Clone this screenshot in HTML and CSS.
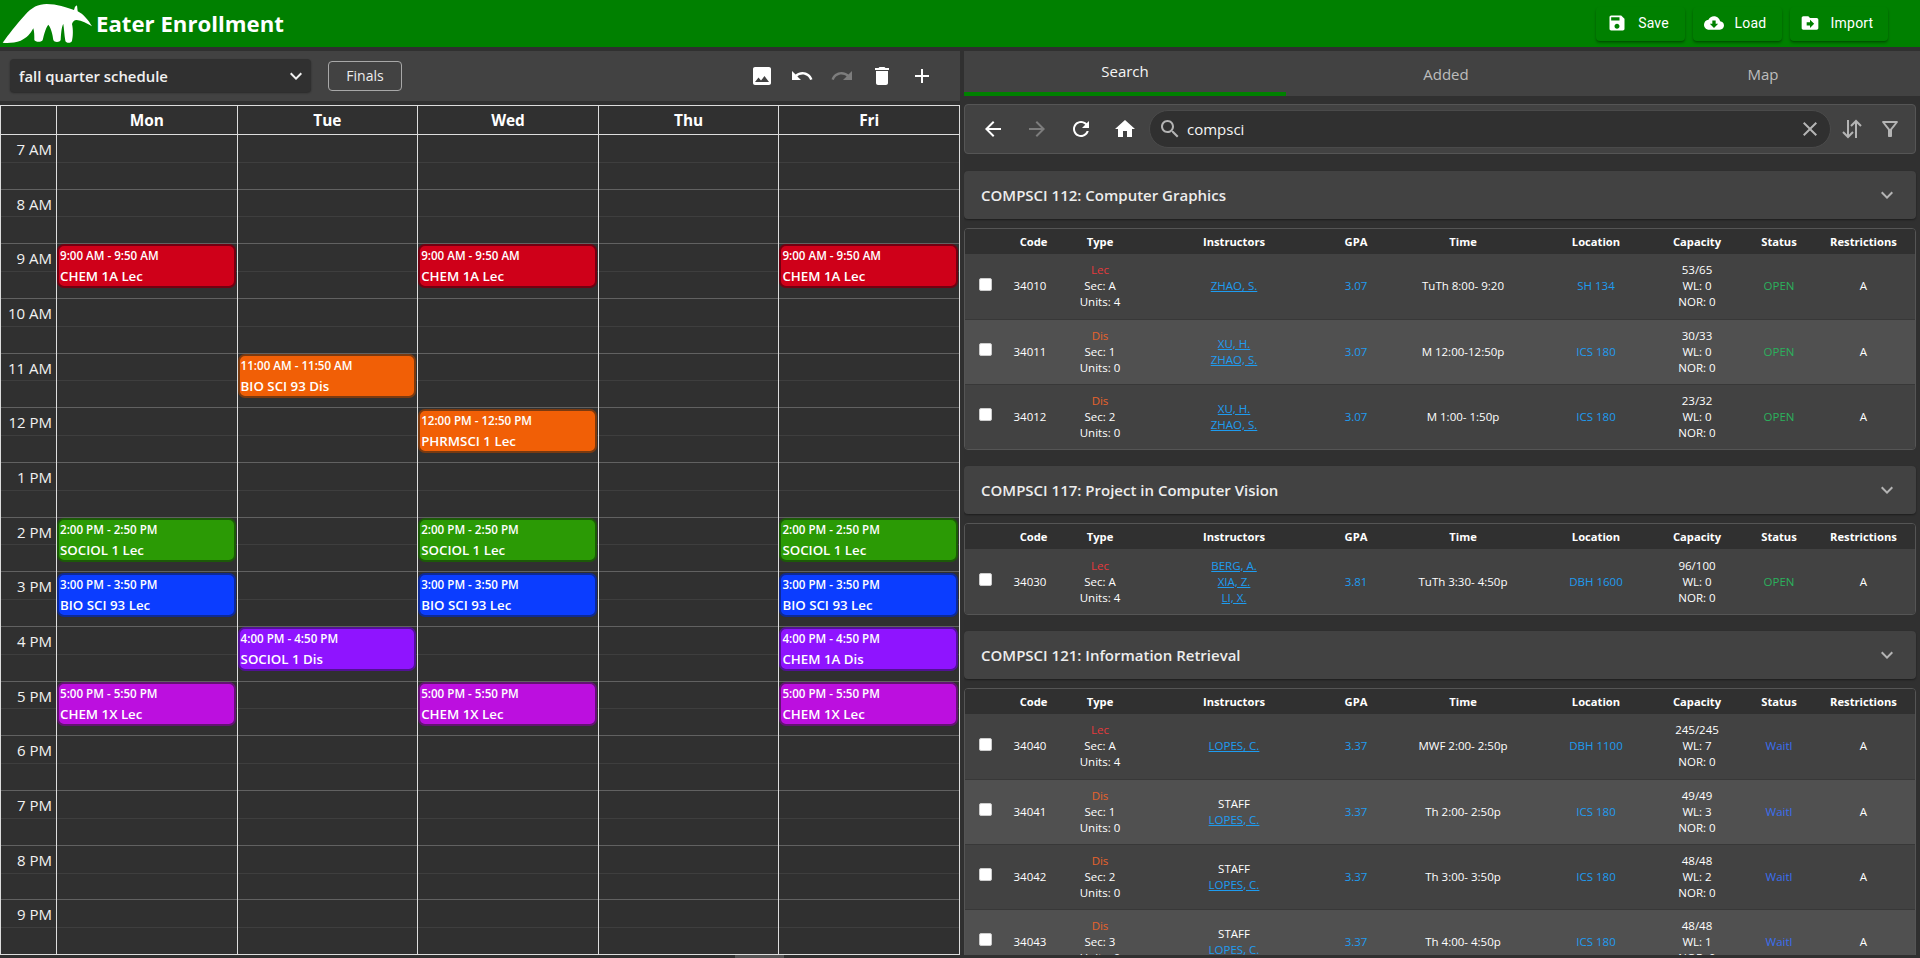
FILE: index.html
```html
<!DOCTYPE html>
<html lang="en">
<head>
<meta charset="utf-8">
<title>Eater Enrollment</title>
<link rel="stylesheet" href="styles.css">
</head>
<body>
<svg class="sprite" aria-hidden="true">
  <symbol id="i-image" viewBox="0 0 24 24"><path d="M21 19V5c0-1.1-.9-2-2-2H5c-1.1 0-2 .9-2 2v14c0 1.1.9 2 2 2h14c1.1 0 2-.9 2-2zM8.5 13.5l2.5 3.01L14.5 12l4.5 6H5l3.5-4.5z"/></symbol>
  <symbol id="i-undo" viewBox="0 0 24 24"><path d="M12.5 8c-2.65 0-5.05.99-6.9 2.6L2 7v9h9l-3.62-3.62c1.39-1.16 3.16-1.88 5.12-1.88 3.54 0 6.55 2.31 7.6 5.5l2.37-.78C21.08 11.03 17.15 8 12.5 8z"/></symbol>
  <symbol id="i-redo" viewBox="0 0 24 24"><path d="M18.4 10.6C16.55 8.99 14.15 8 11.5 8c-4.65 0-8.58 3.03-9.96 7.22L3.9 16c1.05-3.19 4.05-5.5 7.6-5.5 1.95 0 3.73.72 5.12 1.88L13 16h9V7l-3.6 3.6z"/></symbol>
  <symbol id="i-delete" viewBox="0 0 24 24"><path d="M6 19c0 1.1.9 2 2 2h8c1.1 0 2-.9 2-2V7H6v12zM19 4h-3.5l-1-1h-5l-1 1H5v2h14V4z"/></symbol>
  <symbol id="i-add" viewBox="0 0 24 24"><path d="M19 13h-6v6h-2v-6H5v-2h6V5h2v6h6v2z"/></symbol>
  <symbol id="i-back" viewBox="0 0 24 24"><path d="M20 11H7.83l5.59-5.59L12 4l-8 8 8 8 1.41-1.41L7.83 13H20v-2z"/></symbol>
  <symbol id="i-forward" viewBox="0 0 24 24"><path d="M12 4l-1.41 1.41L16.17 11H4v2h12.17l-5.58 5.59L12 20l8-8z"/></symbol>
  <symbol id="i-refresh" viewBox="0 0 24 24"><path d="M17.65 6.35C16.2 4.9 14.21 4 12 4c-4.42 0-7.99 3.58-7.99 8s3.57 8 7.99 8c3.73 0 6.84-2.55 7.73-6h-2.08c-.82 2.33-3.04 4-5.65 4-3.31 0-6-2.69-6-6s2.69-6 6-6c1.66 0 3.14.69 4.22 1.78L13 11h7V4l-2.35 2.35z"/></symbol>
  <symbol id="i-home" viewBox="0 0 24 24"><path d="M10 20v-6h4v6h5v-8h3L12 3 2 12h3v8z"/></symbol>
  <symbol id="i-search" viewBox="0 0 24 24"><path d="M15.5 14h-.79l-.28-.27C15.41 12.59 16 11.11 16 9.5 16 5.91 13.09 3 9.5 3S3 5.91 3 9.5 5.91 16 9.5 16c1.61 0 3.09-.59 4.23-1.57l.27.28v.79l5 4.99L20.49 19l-4.99-5zm-6 0C7.01 14 5 11.99 5 9.5S7.01 5 9.5 5 14 7.01 14 9.5 11.99 14 9.5 14z"/></symbol>
  <symbol id="i-clear" viewBox="0 0 24 24"><path d="M19 6.41 17.59 5 12 10.59 6.41 5 5 6.41 10.59 12 5 17.59 6.41 19 12 13.41 17.59 19 19 17.59 13.41 12z"/></symbol>
  <symbol id="i-sort" viewBox="0 0 24 24"><path class="stroke-only" d="M8 3v17M3 15l5 5 5-5M16 21V4M11 9l5-5 5 5"/></symbol>
  <symbol id="i-filter" viewBox="0 0 24 24"><path d="M7 6h10l-5.01 6.3L7 6zm-2.75-.39C6.27 8.2 10 13 10 13v6c0 .55.45 1 1 1h2c.55 0 1-.45 1-1v-6s3.72-4.8 5.74-7.39c.51-.66.04-1.61-.79-1.61H5.04c-.83 0-1.3.95-.79 1.61z"/></symbol>
  <symbol id="i-expand" viewBox="0 0 24 24"><path d="M16.59 8.59 12 13.17 7.41 8.59 6 10l6 6 6-6z"/></symbol>
  <symbol id="i-save" viewBox="0 0 24 24"><path d="M17 3H5c-1.11 0-2 .9-2 2v14c0 1.1.89 2 2 2h14c1.1 0 2-.9 2-2V7l-4-4zm-5 16c-1.66 0-3-1.34-3-3s1.34-3 3-3 3 1.34 3 3-1.34 3-3 3zm3-10H5V5h10v4z"/></symbol>
  <symbol id="i-cloud" viewBox="0 0 24 24"><path d="M19.35 10.04C18.67 6.59 15.64 4 12 4 9.11 4 6.6 5.64 5.35 8.04 2.34 8.36 0 10.91 0 14c0 3.31 2.69 6 6 6h13c2.76 0 5-2.24 5-5 0-2.64-2.05-4.78-4.65-4.96zM17 13l-5 5-5-5h3V9h4v4h3z"/></symbol>
  <symbol id="i-import" viewBox="0 0 24 24"><path d="M20 6h-8l-2-2H4c-1.1 0-1.99.9-1.99 2L2 18c0 1.1.9 2 2 2h16c1.1 0 2-.9 2-2V8c0-1.1-.9-2-2-2zm-8 12v-3H8v-4h4V8l5 5-5 5z"/></symbol>
</svg>

<header class="topbar">
  <div class="brand">
    <svg class="logo" viewBox="0 0 300 144"><path d="M8 128C25 105 50 72 75 45C95 22 115 12 140 12C170 12 200 22 222 30L225 20L231 16L233 34C250 42 265 60 276 79C262 70 245 62 230 60C222 60 218 66 216 72C220 90 219 110 216 122C214 130 198 130 196 122C193 105 192 85 190 72C186 78 184 90 182 120C180 128 162 128 160 120C158 105 154 85 145 74C136 85 132 105 128 120C126 127 106 127 103 120C103 108 103 95 100 85C92 100 80 115 62 122C45 128 25 130 8 128Z"/></svg>
    <span class="brand-name">Eater Enrollment</span>
  </div>
  <nav class="top-actions">
    <button class="top-btn btn-save"><svg class="ic20"><use href="#i-save"/></svg><span>Save</span></button>
    <button class="top-btn btn-load"><svg class="ic20"><use href="#i-cloud"/></svg><span>Load</span></button>
    <button class="top-btn btn-import"><svg class="ic20"><use href="#i-import"/></svg><span>Import</span></button>
  </nav>
</header>

<main class="main">
  <section class="left">
    <div class="cal-toolbar">
      <div class="schedule-select"><span>fall quarter schedule</span><svg class="ic24"><use href="#i-expand"/></svg></div>
      <button class="finals">Finals</button>
      <div class="tool-icons">
        <svg class="ic24"><use href="#i-image"/></svg>
        <svg class="ic24"><use href="#i-undo"/></svg>
        <svg class="ic24 dim"><use href="#i-redo"/></svg>
        <svg class="ic24"><use href="#i-delete"/></svg>
        <svg class="ic24"><use href="#i-add"/></svg>
      </div>
    </div>

    <div class="calendar">
      <div class="cal-head">
        <div class="head-cell"></div>
        <div class="head-cell">Mon</div>
        <div class="head-cell">Tue</div>
        <div class="head-cell">Wed</div>
        <div class="head-cell">Thu</div>
        <div class="head-cell">Fri</div>
      </div>
      <div class="cal-body">
        <div class="time-col">
          <div class="slot"><span>7 AM</span></div><div class="slot"><span>8 AM</span></div><div class="slot"><span>9 AM</span></div><div class="slot"><span>10 AM</span></div><div class="slot"><span>11 AM</span></div><div class="slot"><span>12 PM</span></div><div class="slot"><span>1 PM</span></div><div class="slot"><span>2 PM</span></div><div class="slot"><span>3 PM</span></div><div class="slot"><span>4 PM</span></div><div class="slot"><span>5 PM</span></div><div class="slot"><span>6 PM</span></div><div class="slot"><span>7 PM</span></div><div class="slot"><span>8 PM</span></div><div class="slot"><span>9 PM</span></div>
        </div>
        <div class="day" id="mon">
          <div class="slot"></div><div class="slot"></div><div class="slot"></div><div class="slot"></div><div class="slot"></div><div class="slot"></div><div class="slot"></div><div class="slot"></div><div class="slot"></div><div class="slot"></div><div class="slot"></div><div class="slot"></div><div class="slot"></div><div class="slot"></div><div class="slot"></div>
          <div class="event red" style="top:110px"><div class="ev-time">9:00 AM - 9:50 AM</div><div class="ev-title">CHEM 1A Lec</div></div>
          <div class="event green" style="top:384px"><div class="ev-time">2:00 PM - 2:50 PM</div><div class="ev-title">SOCIOL 1 Lec</div></div>
          <div class="event blue" style="top:439px"><div class="ev-time">3:00 PM - 3:50 PM</div><div class="ev-title">BIO SCI 93 Lec</div></div>
          <div class="event magenta" style="top:548px"><div class="ev-time">5:00 PM - 5:50 PM</div><div class="ev-title">CHEM 1X Lec</div></div>
        </div>
        <div class="day" id="tue">
          <div class="slot"></div><div class="slot"></div><div class="slot"></div><div class="slot"></div><div class="slot"></div><div class="slot"></div><div class="slot"></div><div class="slot"></div><div class="slot"></div><div class="slot"></div><div class="slot"></div><div class="slot"></div><div class="slot"></div><div class="slot"></div><div class="slot"></div>
          <div class="event orange" style="top:220px"><div class="ev-time">11:00 AM - 11:50 AM</div><div class="ev-title">BIO SCI 93 Dis</div></div>
          <div class="event purple" style="top:493px"><div class="ev-time">4:00 PM - 4:50 PM</div><div class="ev-title">SOCIOL 1 Dis</div></div>
        </div>
        <div class="day" id="wed">
          <div class="slot"></div><div class="slot"></div><div class="slot"></div><div class="slot"></div><div class="slot"></div><div class="slot"></div><div class="slot"></div><div class="slot"></div><div class="slot"></div><div class="slot"></div><div class="slot"></div><div class="slot"></div><div class="slot"></div><div class="slot"></div><div class="slot"></div>
          <div class="event red" style="top:110px"><div class="ev-time">9:00 AM - 9:50 AM</div><div class="ev-title">CHEM 1A Lec</div></div>
          <div class="event orange" style="top:275px"><div class="ev-time">12:00 PM - 12:50 PM</div><div class="ev-title">PHRMSCI 1 Lec</div></div>
          <div class="event green" style="top:384px"><div class="ev-time">2:00 PM - 2:50 PM</div><div class="ev-title">SOCIOL 1 Lec</div></div>
          <div class="event blue" style="top:439px"><div class="ev-time">3:00 PM - 3:50 PM</div><div class="ev-title">BIO SCI 93 Lec</div></div>
          <div class="event magenta" style="top:548px"><div class="ev-time">5:00 PM - 5:50 PM</div><div class="ev-title">CHEM 1X Lec</div></div>
        </div>
        <div class="day" id="thu">
          <div class="slot"></div><div class="slot"></div><div class="slot"></div><div class="slot"></div><div class="slot"></div><div class="slot"></div><div class="slot"></div><div class="slot"></div><div class="slot"></div><div class="slot"></div><div class="slot"></div><div class="slot"></div><div class="slot"></div><div class="slot"></div><div class="slot"></div>
        </div>
        <div class="day" id="fri">
          <div class="slot"></div><div class="slot"></div><div class="slot"></div><div class="slot"></div><div class="slot"></div><div class="slot"></div><div class="slot"></div><div class="slot"></div><div class="slot"></div><div class="slot"></div><div class="slot"></div><div class="slot"></div><div class="slot"></div><div class="slot"></div><div class="slot"></div>
          <div class="event red" style="top:110px"><div class="ev-time">9:00 AM - 9:50 AM</div><div class="ev-title">CHEM 1A Lec</div></div>
          <div class="event green" style="top:384px"><div class="ev-time">2:00 PM - 2:50 PM</div><div class="ev-title">SOCIOL 1 Lec</div></div>
          <div class="event blue" style="top:439px"><div class="ev-time">3:00 PM - 3:50 PM</div><div class="ev-title">BIO SCI 93 Lec</div></div>
          <div class="event purple" style="top:493px"><div class="ev-time">4:00 PM - 4:50 PM</div><div class="ev-title">CHEM 1A Dis</div></div>
          <div class="event magenta" style="top:548px"><div class="ev-time">5:00 PM - 5:50 PM</div><div class="ev-title">CHEM 1X Lec</div></div>
        </div>
      </div>
    </div>
    <div class="hscroll"><div class="hthumb"></div></div>
  </section>

  <section class="right">
    <div class="tabs">
      <div class="tab active">Search</div>
      <div class="tab">Added</div>
      <div class="tab">Map</div>
    </div>
    <div class="right-content">
      <div class="searchbar">
        <div class="nav-icons">
          <svg class="ic24"><use href="#i-back"/></svg>
          <svg class="ic24 dim"><use href="#i-forward"/></svg>
          <svg class="ic24"><use href="#i-refresh"/></svg>
          <svg class="ic24"><use href="#i-home"/></svg>
        </div>
        <div class="search-pill">
          <svg class="ic24 grey"><use href="#i-search"/></svg>
          <span class="query">compsci</span>
          <svg class="ic24 grey clear"><use href="#i-clear"/></svg>
        </div>
        <svg class="ic24 grey sort"><use href="#i-sort"/></svg>
        <svg class="ic24 grey filter"><use href="#i-filter"/></svg>
      </div>

      <div class="course-head"><span>COMPSCI 112: Computer Graphics</span><svg class="ic24 grey"><use href="#i-expand"/></svg></div>
      <div class="course-table">
        <table>
          <colgroup><col class="c-check"><col class="c-code"><col class="c-type"><col class="c-inst"><col class="c-gpa"><col class="c-time"><col class="c-loc"><col class="c-cap"><col class="c-stat"><col class="c-rest"></colgroup>
          <thead><tr><th></th><th>Code</th><th>Type</th><th>Instructors</th><th>GPA</th><th>Time</th><th>Location</th><th>Capacity</th><th>Status</th><th>Restrictions</th></tr></thead>
          <tbody>
            <tr><td><input class="pick" type="checkbox"></td><td class="code">34010</td><td><span class="lec">Lec</span><br>Sec: A<br>Units: 4</td><td><a>ZHAO, S.</a></td><td class="lnk">3.07</td><td>TuTh 8:00- 9:20</td><td class="lnk">SH 134</td><td>53/65<br>WL: 0<br>NOR: 0</td><td class="open">OPEN</td><td>A</td></tr>
            <tr><td><input class="pick" type="checkbox"></td><td class="code">34011</td><td><span class="dis">Dis</span><br>Sec: 1<br>Units: 0</td><td><a>XU, H.</a><br><a>ZHAO, S.</a></td><td class="lnk">3.07</td><td>M 12:00-12:50p</td><td class="lnk">ICS 180</td><td>30/33<br>WL: 0<br>NOR: 0</td><td class="open">OPEN</td><td>A</td></tr>
            <tr><td><input class="pick" type="checkbox"></td><td class="code">34012</td><td><span class="dis">Dis</span><br>Sec: 2<br>Units: 0</td><td><a>XU, H.</a><br><a>ZHAO, S.</a></td><td class="lnk">3.07</td><td>M 1:00- 1:50p</td><td class="lnk">ICS 180</td><td>23/32<br>WL: 0<br>NOR: 0</td><td class="open">OPEN</td><td>A</td></tr>
          </tbody>
        </table>
      </div>

      <div class="course-head"><span>COMPSCI 117: Project in Computer Vision</span><svg class="ic24 grey"><use href="#i-expand"/></svg></div>
      <div class="course-table">
        <table>
          <colgroup><col class="c-check"><col class="c-code"><col class="c-type"><col class="c-inst"><col class="c-gpa"><col class="c-time"><col class="c-loc"><col class="c-cap"><col class="c-stat"><col class="c-rest"></colgroup>
          <thead><tr><th></th><th>Code</th><th>Type</th><th>Instructors</th><th>GPA</th><th>Time</th><th>Location</th><th>Capacity</th><th>Status</th><th>Restrictions</th></tr></thead>
          <tbody>
            <tr><td><input class="pick" type="checkbox"></td><td class="code">34030</td><td><span class="lec">Lec</span><br>Sec: A<br>Units: 4</td><td><a>BERG, A.</a><br><a>XIA, Z.</a><br><a>LI, X.</a></td><td class="lnk">3.81</td><td>TuTh 3:30- 4:50p</td><td class="lnk">DBH 1600</td><td>96/100<br>WL: 0<br>NOR: 0</td><td class="open">OPEN</td><td>A</td></tr>
          </tbody>
        </table>
      </div>

      <div class="course-head"><span>COMPSCI 121: Information Retrieval</span><svg class="ic24 grey"><use href="#i-expand"/></svg></div>
      <div class="course-table">
        <table>
          <colgroup><col class="c-check"><col class="c-code"><col class="c-type"><col class="c-inst"><col class="c-gpa"><col class="c-time"><col class="c-loc"><col class="c-cap"><col class="c-stat"><col class="c-rest"></colgroup>
          <thead><tr><th></th><th>Code</th><th>Type</th><th>Instructors</th><th>GPA</th><th>Time</th><th>Location</th><th>Capacity</th><th>Status</th><th>Restrictions</th></tr></thead>
          <tbody>
            <tr><td><input class="pick" type="checkbox"></td><td class="code">34040</td><td><span class="lec">Lec</span><br>Sec: A<br>Units: 4</td><td><a>LOPES, C.</a></td><td class="lnk">3.37</td><td>MWF 2:00- 2:50p</td><td class="lnk">DBH 1100</td><td>245/245<br>WL: 7<br>NOR: 0</td><td class="wait">Waitl</td><td>A</td></tr>
            <tr><td><input class="pick" type="checkbox"></td><td class="code">34041</td><td><span class="dis">Dis</span><br>Sec: 1<br>Units: 0</td><td>STAFF<br><a>LOPES, C.</a></td><td class="lnk">3.37</td><td>Th 2:00- 2:50p</td><td class="lnk">ICS 180</td><td>49/49<br>WL: 3<br>NOR: 0</td><td class="wait">Waitl</td><td>A</td></tr>
            <tr><td><input class="pick" type="checkbox"></td><td class="code">34042</td><td><span class="dis">Dis</span><br>Sec: 2<br>Units: 0</td><td>STAFF<br><a>LOPES, C.</a></td><td class="lnk">3.37</td><td>Th 3:00- 3:50p</td><td class="lnk">ICS 180</td><td>48/48<br>WL: 2<br>NOR: 0</td><td class="wait">Waitl</td><td>A</td></tr>
            <tr><td><input class="pick" type="checkbox"></td><td class="code">34043</td><td><span class="dis">Dis</span><br>Sec: 3<br>Units: 0</td><td>STAFF<br><a>LOPES, C.</a></td><td class="lnk">3.37</td><td>Th 4:00- 4:50p</td><td class="lnk">ICS 180</td><td>48/48<br>WL: 1<br>NOR: 0</td><td class="wait">Waitl</td><td>A</td></tr>
          </tbody>
        </table>
      </div>
    </div>
  </section>
</main>
</body>
</html>
```

FILE: styles.css
```css
* { box-sizing: border-box; }
html, body { margin: 0; height: 958px; overflow: hidden; }
body {
  background: #303030;
  color: #fff;
  font-family: "Open Sans", "Noto Sans", sans-serif;
}
.sprite { display: none; }
svg { fill: currentColor; flex: none; display: block; }
.stroke-only { fill: none; stroke: currentColor; stroke-width: 2; }
.ic24 { width: 24px; height: 24px; }
.ic20 { width: 20px; height: 20px; }
.dim { color: #7d7d7d; }
.grey { color: #b4b4b4; }

/* top bar */
.topbar {
  height: 47px;
  background: #008000;
  display: flex;
  align-items: center;
  justify-content: space-between;
  padding-right: 32px;
}
.brand { display: flex; align-items: center; }
.logo { width: 100px; height: 48px; fill: #fff; margin-top: 1px; }
.brand-name { font-size: 22.2px; font-weight: 700; margin-left: -4px; line-height: 49px; }
.top-actions { display: flex; gap: 8px; }
.top-btn {
  height: 34px;
  border: 0;
  border-radius: 4px;
  background: #008000;
  color: #fff;
  box-shadow: 0 2px 3px rgba(0, 0, 0, .28), 0 1px 1px rgba(0, 0, 0, .14);
  display: flex;
  align-items: center;
  justify-content: center;
  gap: 11px;
  padding: 0 5px 2px 0;
  font: 400 14px/1 Roboto, sans-serif;
  letter-spacing: .2px;
}
.btn-save, .btn-load { width: 89px; }
.btn-import { width: 98px; }

/* layout */
.main { display: flex; gap: 4px; margin-top: 4px; height: 907px; }
.left { width: 960px; display: flex; flex-direction: column; }
.right { width: 956px; flex: 1; display: flex; flex-direction: column; overflow: hidden; height: 904px; }

/* calendar toolbar */
.cal-toolbar {
  height: 50px;
  background: #424242;
  display: flex;
  align-items: center;
  padding-left: 10px;
  margin-bottom: 4px;
}
.schedule-select {
  width: 301px;
  height: 33px;
  background: #303030;
  border-radius: 4px;
  box-shadow: 0 1px 2px rgba(0, 0, 0, .4);
  display: flex;
  align-items: center;
  justify-content: space-between;
  padding: 0 3px 0 9px;
  font-size: 14.9px;
  font-weight: 600;
  color: #f0f0f0;
}
.finals {
  width: 74px;
  height: 30px;
  margin-left: 17px;
  background: transparent;
  border: 1px solid #a8a8a8;
  border-radius: 4px;
  color: #eee;
  font: 400 14px "Open Sans", sans-serif;
  padding: 0;
}
.tool-icons { margin-left: auto; margin-right: 26px; display: flex; gap: 16px; }

/* calendar grid */
.calendar { height: 851px; border: 1px solid #ddd; background: #303030; display: flex; flex-direction: column; }
.cal-head, .cal-body { display: grid; grid-template-columns: 55px repeat(5, 1fr); }
.cal-head { height: 29px; border-bottom: 1px solid #ddd; flex: none; }
.head-cell {
  border-left: 1px solid #ddd;
  text-align: center;
  font-size: 15.4px;
  font-weight: 700;
  line-height: 30px;
}
.head-cell:first-child { border-left: 0; }
.cal-body { flex: 1; }
.time-col, .day { display: flex; flex-direction: column; position: relative; }
.day { border-left: 1px solid #ddd; }
.slot {
  flex: 1;
  position: relative;
  border-top: 1px solid #616161;
}
.slot:first-child { border-top: 0; }
.slot::after {
  content: "";
  position: absolute;
  left: 0;
  right: 0;
  top: 50%;
  border-top: 1px solid #3e3e3e;
}
.time-col .slot span {
  display: block;
  text-align: right;
  padding-right: 4px;
  font-size: 15px;
  line-height: 29px;
  color: #f2f2f2;
  position: relative;
  z-index: 1;
}

/* events */
.event {
  position: absolute;
  left: 0;
  right: 1px;
  height: 44px;
  margin-top: -1px;
  border: 2px solid;
  border-radius: 7px;
  padding: 0;
  color: #fff;
  z-index: 2;
}
.ev-time { font-size: 11.6px; font-weight: 600; line-height: 20px; padding-left: 1px; }
.ev-title { font-size: 13.3px; font-weight: 600; line-height: 20px; padding-left: 1px; }
.red { background: #cf0019; border-color: #730011; }
.orange { background: #f15f06; border-color: #7a3a10; }
.green { background: #2b9a05; border-color: #1c5a08; }
.blue { background: #0b3dff; border-color: #0e2a96; }
.purple { background: #8f14ff; border-color: #521196; }
.magenta { background: #bc0fdf; border-color: #641274; }
.hscroll { height: 3px; flex: none; }
.hthumb { width: 49px; height: 3px; margin-left: 735px; background: #555; }

/* tabs */
.tabs {
  height: 45px;
  flex: none;
  background: #424242;
  display: grid;
  grid-template-columns: 322px 322px 1fr;
  margin-bottom: 8px;
}
.tab {
  text-align: center;
  font-size: 15px;
  line-height: 47px;
  color: #bdbdbd;
  border-bottom: 4px solid transparent;
  padding-right: 2px;
  overflow: hidden;
}
.tab.active { color: #f5f5f5; border-bottom-color: #008000; line-height: 41px; padding-right: 0; }
.right-content { width: 952px; }

/* search bar */
.searchbar {
  height: 50px;
  background: #424242;
  border: 1px solid #555;
  border-radius: 4px;
  display: flex;
  align-items: center;
  margin-bottom: 17px;
  padding-left: 16px;
}
.nav-icons { display: flex; gap: 20px; }
.search-pill {
  width: 682px;
  height: 38px;
  margin-left: 12px;
  background: #303030;
  border: 1px solid #4a4a4a;
  border-radius: 19px;
  display: flex;
  align-items: center;
  padding-left: 8px;
}
.query { font-size: 15px; margin-left: 5px; color: #f5f5f5; }
.clear { margin-left: auto; margin-right: 8px; }
.sort { margin-left: 9px; }
.filter { margin-left: 14px; }

/* course lists */
.course-head {
  height: 48px;
  background: #424242;
  border-radius: 4px;
  box-shadow: 0 1px 2px rgba(0, 0, 0, .4);
  display: flex;
  align-items: center;
  justify-content: space-between;
  padding: 0 17px;
  font-size: 15px;
  font-weight: 600;
  color: #ededed;
  margin-bottom: 9px;
}
.course-head span { line-height: 46px; }
.course-table {
  border: 1px solid #555;
  border-radius: 4px;
  overflow: hidden;
  margin-bottom: 16px;
}
table { width: 950px; table-layout: fixed; border-collapse: collapse; font-size: 11.5px; line-height: 16px; }
.c-check { width: 40px; }
.c-code { width: 57px; }
.c-type { width: 76px; }
.c-inst { width: 192px; }
.c-gpa { width: 52px; }
.c-time { width: 162px; }
.c-loc { width: 104px; }
.c-cap { width: 98px; }
.c-stat { width: 66px; }
.c-rest { width: 103px; }
thead tr { height: 25px; background: #303030; }
th { padding: 0; font-weight: 700; text-align: center; font-size: 11.2px; }
tbody tr { height: 65px; background: #424242; border-bottom: 1px solid #383838; }
tbody tr:nth-child(even) { background: #505050; }
tbody tr:last-child { border-bottom: 0; }
td { padding: 0; text-align: center; color: #fff; }
td.code { padding-right: 7px; }
.lec { color: #e5393c; }
.dis { color: #e8632c; }
td a { color: #1e9cf0; text-decoration: underline; }
.lnk { color: #1e9cf0; }
.open { color: #2bb15c; }
.wait { color: #3a6ff0; }
.pick {
  appearance: none;
  display: block;
  width: 13px;
  height: 13px;
  margin: -4px auto 0;
  background: #fff;
  border: 1px solid #ccc;
  border-radius: 2px;
}
```
